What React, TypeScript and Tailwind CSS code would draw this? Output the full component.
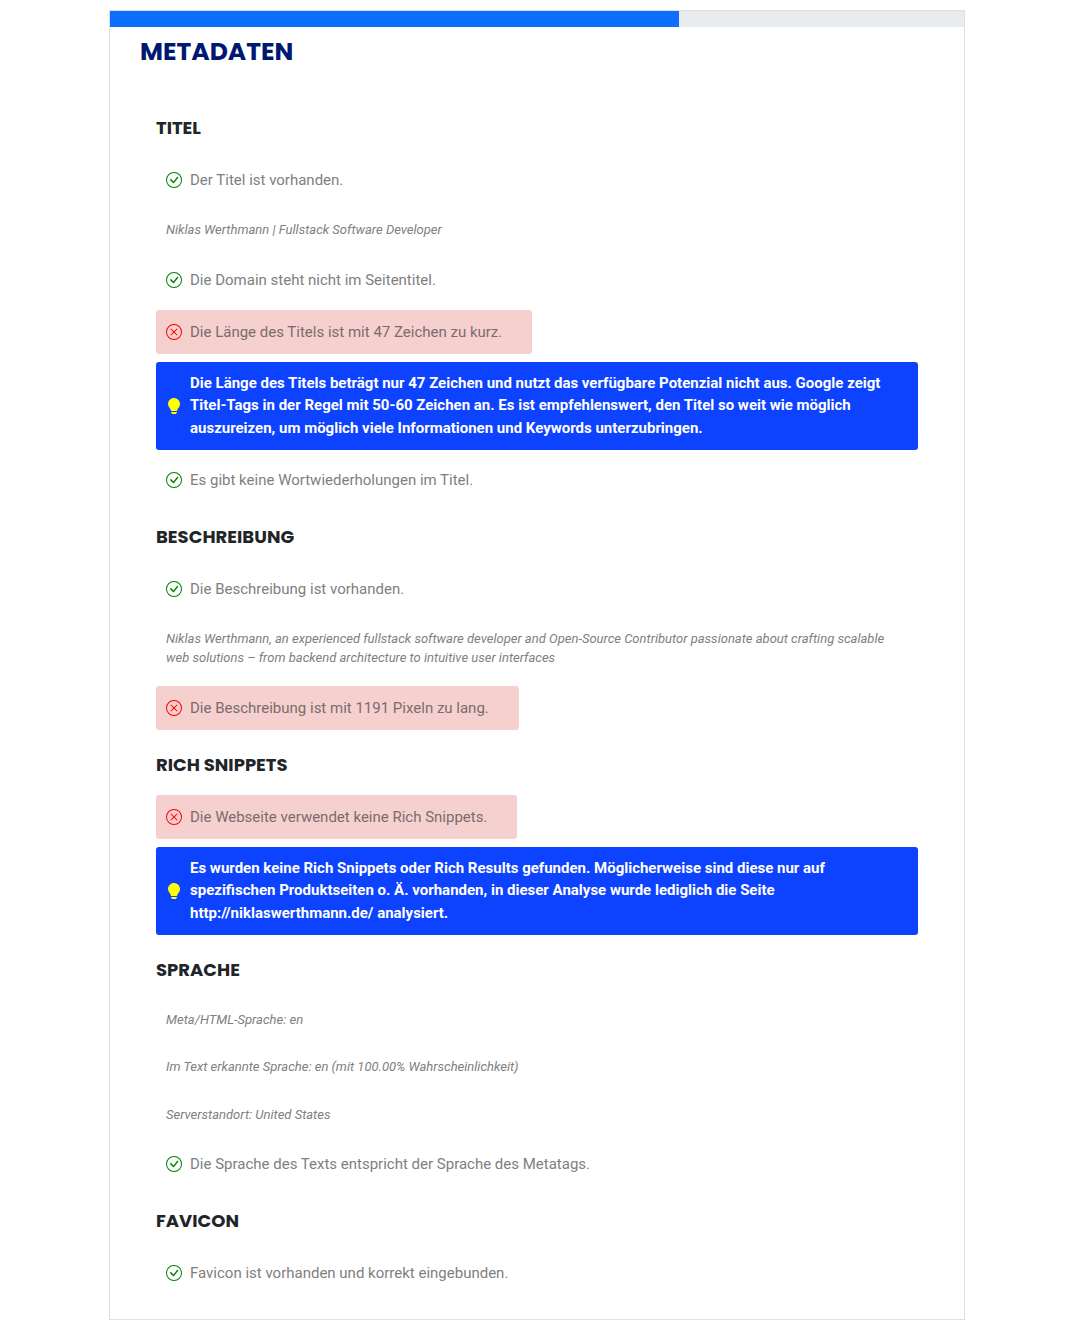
import type { ReactNode } from "react";
import { BsCheckCircle, BsLightbulbFill, BsXCircle } from "react-icons/bs";

const row = "flex items-center gap-2 rounded-[3px] py-2.5 pl-2.5 pr-[30px] text-[15px]";

function Passed({ children }: { children: ReactNode }) {
  return (
    <div className={`${row} self-start leading-6 text-[#808080]`}>
      <BsCheckCircle className="size-4 shrink-0 text-[#008000]" aria-hidden />
      <p>{children}</p>
    </div>
  );
}

function Failed({ children }: { children: ReactNode }) {
  return (
    <div className={`${row} self-start bg-[#f6d0ce] leading-6 text-[#7a6c6c]`}>
      <BsXCircle className="size-4 shrink-0 text-[#ff0000]" aria-hidden />
      <p>{children}</p>
    </div>
  );
}

function Hint({ children }: { children: ReactNode }) {
  return (
    <div className={`${row} min-h-22 bg-[#0d42ff] leading-normal font-bold text-white`}>
      <BsLightbulbFill className="size-4 shrink-0 text-[#ffff00]" aria-hidden />
      <p>{children}</p>
    </div>
  );
}

function Value({ children }: { children: ReactNode }) {
  return (
    <p className="py-2.5 pl-2.5 pr-[30px] text-[13px] leading-normal text-[#808080] italic">
      {children}
    </p>
  );
}

function Section({ title, children }: { title: string; children: ReactNode }) {
  return (
    <section className="pt-6">
      <h3 className="mb-[19px] font-['Poppins','Inter',sans-serif] text-[18px] leading-[22px] font-bold text-[#212529] uppercase">
        {title}
      </h3>
      <div className="flex flex-col gap-2">{children}</div>
    </section>
  );
}

export default function App() {
  return (
    <main className="bg-white py-2.5 pr-[105px] pl-[109px] font-['Roboto',sans-serif]">
      <div className="border border-[#dfdfdf] pb-6">
        <div
          className="h-4 bg-[#e9ecef]"
          role="progressbar"
          aria-label="Metadaten"
          aria-valuenow={67}
          aria-valuemin={0}
          aria-valuemax={100}
        >
          <div className="h-full w-2/3 bg-[#0d6efd]" />
        </div>
        <h2 className="mt-[9px] px-[30px] font-['Poppins','Inter',sans-serif] text-[25px] leading-8 font-bold text-[#001871] uppercase">
          Metadaten
        </h2>
        <div className="px-[46px] pt-[25px]">
          <Section title="Titel">
            <Passed>Der Titel ist vorhanden.</Passed>
            <Value>Niklas Werthmann | Fullstack Software Developer</Value>
            <Passed>Die Domain steht nicht im Seitentitel.</Passed>
            <Failed>Die Länge des Titels ist mit 47 Zeichen zu kurz.</Failed>
            <Hint>
              Die Länge des Titels beträgt nur 47 Zeichen und nutzt das verfügbare Potenzial nicht
              aus. Google zeigt Titel-Tags in der Regel mit 50-60 Zeichen an. Es ist empfehlenswert,
              den Titel so weit wie möglich auszureizen, um möglich viele Informationen und Keywords
              unterzubringen.
            </Hint>
            <Passed>Es gibt keine Wortwiederholungen im Titel.</Passed>
          </Section>
          <Section title="Beschreibung">
            <Passed>Die Beschreibung ist vorhanden.</Passed>
            <Value>
              Niklas Werthmann, an experienced fullstack software developer and Open-Source
              Contributor passionate about crafting scalable web solutions – from backend
              architecture to intuitive user interfaces
            </Value>
            <Failed>Die Beschreibung ist mit 1191 Pixeln zu lang.</Failed>
          </Section>
          <Section title="Rich Snippets">
            <Failed>Die Webseite verwendet keine Rich Snippets.</Failed>
            <Hint>
              Es wurden keine Rich Snippets oder Rich Results gefunden. Möglicherweise sind diese
              nur auf spezifischen Produktseiten o. Ä. vorhanden, in dieser Analyse wurde lediglich
              die Seite http://niklaswerthmann.de/ analysiert.
            </Hint>
          </Section>
          <Section title="Sprache">
            <Value>Meta/HTML-Sprache: en</Value>
            <Value>Im Text erkannte Sprache: en (mit 100.00% Wahrscheinlichkeit)</Value>
            <Value>Serverstandort: United States</Value>
            <Passed>Die Sprache des Texts entspricht der Sprache des Metatags.</Passed>
          </Section>
          <Section title="Favicon">
            <Passed>Favicon ist vorhanden und korrekt eingebunden.</Passed>
          </Section>
        </div>
      </div>
    </main>
  );
}
